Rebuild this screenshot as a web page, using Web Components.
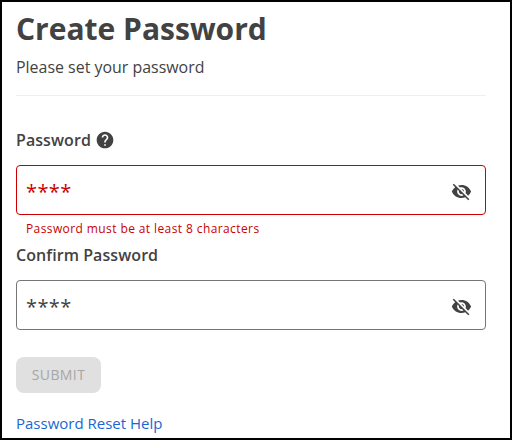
<!DOCTYPE html>
<html lang="en">
<head>
<meta charset="utf-8">
<title>Create Password</title>
<style>
   html, body{
      margin:0;
      height:100%;
   }
   body{
      background:#ffffff;
      color:#424242;
      font-family:'Open Sans', 'Noto Sans', sans-serif;
      font-size:16px;
      overflow:hidden;
   }
</style>
</head>
<body>
<password-card>
   <page-heading heading="Create Password">Please set your password</page-heading>
   <password-field label="Password" value="****" error="Password must be at least 8 characters">
      <help-icon slot="help"></help-icon>
   </password-field>
   <password-field label="Confirm Password" value="****"></password-field>
   <submit-button disabled>SUBMIT</submit-button>
   <help-link href="#reset">Password Reset Help</help-link>
</password-card>

<script>
'use strict'

const makeTemplate = (html) => {
   const template = document.createElement('template')
   template.innerHTML = html
   return template
}

/* Shared base, clones the template of the element into an open shadow root */
class BaseElement extends HTMLElement{
   constructor(){
      super();
      this.attachShadow({mode:'open'});
      this.shadowRoot.appendChild(this.constructor.template.content.cloneNode(true));
   }
}

customElements.define('password-card',
   class PasswordCard extends BaseElement{
      static template = makeTemplate(`
         <style>
            :host{
               display:flex;
               flex-direction:column;
               align-items:stretch;
               box-sizing:border-box;
               width:512px;
               height:440px;
               padding:7px 24px 0 14px;
               border:2px solid #000000;
               overflow:hidden;
            }
         </style>
         <slot></slot>
      `)
   }
)

customElements.define('page-heading',
   class PageHeading extends BaseElement{
      static template = makeTemplate(`
         <style>
            :host{
               display:block;
               height:86px;
               margin-bottom:32px;
               border-bottom:1px solid #eeeeee;
            }
            h1{
               margin:0;
               font-size:30px;
               font-weight:700;
               line-height:40px;
               white-space:nowrap;
            }
            p{
               margin:6px 0 0;
               font-size:15.95px;
               line-height:24px;
            }
         </style>
         <h1></h1>
         <p><slot></slot></p>
      `)
      connectedCallback(){
         this.shadowRoot.querySelector('h1').textContent = this.getAttribute('heading');
      }
   }
)

customElements.define('help-icon',
   class HelpIcon extends BaseElement{
      static template = makeTemplate(`
         <style>
            :host{
               display:block;
               width:20px;
               height:20px;
            }
            svg{
               display:block;
               fill:currentColor;
            }
         </style>
         <svg width="20" height="20" viewBox="0 0 24 24">
            <path d="M12 2C6.480 2 2 6.480 2 12s4.480 10 10 10 10-4.480 10-10S17.520 2 12 2zm1 17h-2v-2h2v2zm2.070-7.750l-.9.920C13.450 12.900 13 13.500 13 15h-2v-.5c0-1.100.450-2.100 1.170-2.830l1.240-1.260c.370-.360.590-.860.590-1.410 0-1.100-.9-2-2-2s-2 .9-2 2H8c0-2.210 1.790-4 4-4s4 1.790 4 4c0 .880-.360 1.680-.930 2.250z"/>
         </svg>
      `)
   }
)

customElements.define('visibility-icon',
   class VisibilityIcon extends BaseElement{
      static template = makeTemplate(`
         <style>
            :host{
               display:block;
               width:21px;
               height:21px;
               margin-top:2px;
               color:#424242;
            }
            svg{
               display:block;
               fill:currentColor;
            }
         </style>
         <svg width="21" height="21" viewBox="0 0 24 24">
            <path d="M12 7c2.760 0 5 2.240 5 5 0 .650-.130 1.260-.360 1.830l2.920 2.920c1.510-1.260 2.700-2.890 3.430-4.750-1.730-4.390-6-7.500-11-7.500-1.400 0-2.740.250-3.980.7l2.160 2.160C10.740 7.130 11.350 7 12 7zM2 4.270l2.280 2.280.460.460C3.080 8.300 1.780 10.020 1 12c1.730 4.390 6 7.500 11 7.500 1.550 0 3.030-.3 4.380-.840l.420.420L19.730 22 21 20.730 3.270 3 2 4.270zM7.530 9.800l1.550 1.550c-.050.210-.080.430-.080.650 0 1.660 1.340 3 3 3 .220 0 .440-.030.650-.080l1.550 1.550c-.670.330-1.410.530-2.200.530-2.760 0-5-2.240-5-5 0-.790.2-1.530.530-2.200zm4.310-.780l3.150 3.150.020-.160c0-1.660-1.340-3-3-3l-.170.010z"/>
         </svg>
      `)
   }
)

customElements.define('password-field',
   class PasswordField extends BaseElement{
      static template = makeTemplate(`
         <style>
            :host{
               display:block;
            }
            .label{
               display:flex;
               align-items:center;
               gap:4px;
               height:24px;
               font-size:16px;
               font-weight:600;
               letter-spacing:.07px;
               line-height:24px;
            }
            .box{
               display:flex;
               align-items:center;
               justify-content:space-between;
               box-sizing:border-box;
               height:50px;
               margin-top:13px;
               padding:0 13px 0 9px;
               border:1px solid #757575;
               border-radius:4px;
            }
            .value{
               margin-top:4px;
               color:#424242;
               font-size:20px;
               letter-spacing:.4px;
               line-height:28px;
            }
            .message{
               height:28px;
               padding-left:10px;
               color:#cc0000;
               font-size:12px;
               letter-spacing:.4px;
               line-height:28px;
            }
            :host(:not([error])) .message{
               display:none;
            }
            :host([error]) .box{
               border-color:#cc0000;
            }
            :host([error]) .value{
               color:#cc0000;
            }
         </style>
         <div class='label'><span class='text'></span><slot name='help'></slot></div>
         <div class='box'><span class='value'></span><visibility-icon></visibility-icon></div>
         <div class='message'></div>
      `)
      connectedCallback(){
         const root = this.shadowRoot;
         root.querySelector('.text').textContent = this.getAttribute('label');
         root.querySelector('.value').textContent = this.getAttribute('value');
         root.querySelector('.message').textContent = this.getAttribute('error') || '';
      }
   }
)

customElements.define('submit-button',
   class SubmitButton extends BaseElement{
      static template = makeTemplate(`
         <style>
            :host{
               display:block;
               margin-top:27px;
            }
            button{
               display:block;
               width:85px;
               height:36px;
               padding:0 0 2px;
               border:0;
               border-radius:8px;
               background:#e0e0e0;
               color:#a6a6a6;
               font:inherit;
               font-size:14px;
               letter-spacing:.4px;
            }
         </style>
         <button type='button'><slot></slot></button>
      `)
      connectedCallback(){
         this.shadowRoot.querySelector('button').disabled = this.hasAttribute('disabled');
      }
   }
)

customElements.define('help-link',
   class HelpLink extends BaseElement{
      static template = makeTemplate(`
         <style>
            :host{
               display:block;
               margin-top:18px;
               font-size:15px;
               line-height:24px;
            }
            a{
               color:#1967d2;
               text-decoration:none;
            }
         </style>
         <a><slot></slot></a>
      `)
      connectedCallback(){
         this.shadowRoot.querySelector('a').setAttribute('href', this.getAttribute('href'));
      }
   }
)
</script>
</body>
</html>
